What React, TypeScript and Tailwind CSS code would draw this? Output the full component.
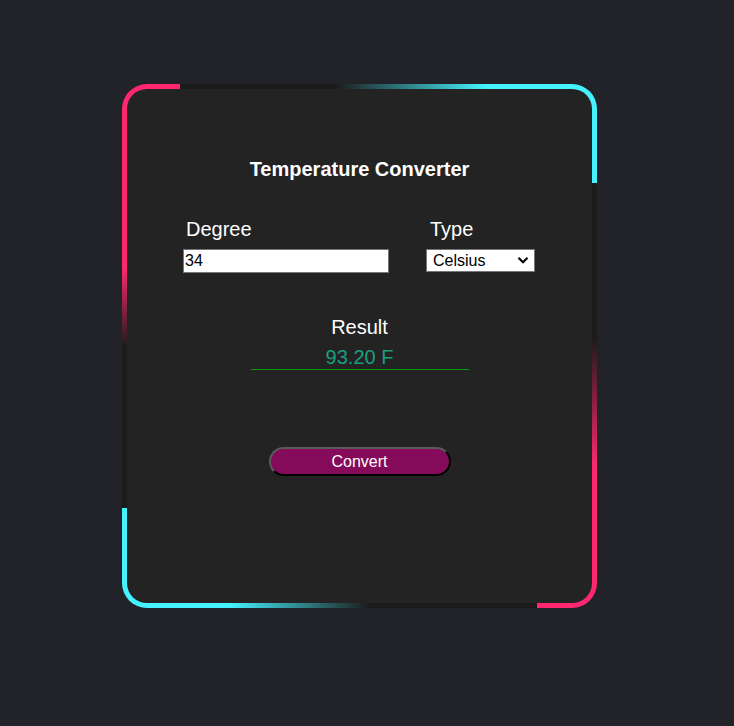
import React from "react";

export default function App() {
  return (
    <div
      className="min-h-[726px] w-full bg-[#222328] pt-[84px] pl-[122px]"
      style={{ fontFamily: '"Liberation Sans", Arial, sans-serif' }}
    >
      <div className="relative w-[475px] h-[524px] rounded-[25px] bg-[#1b1b1b] overflow-hidden">
        {/* gradient border pieces */}
        <div className="absolute left-0 top-0 w-[58px] h-[263px] bg-[linear-gradient(to_bottom,#ff2770_70%,transparent)]" />
        <div className="absolute right-0 top-0 w-[262px] h-[99px] bg-[linear-gradient(to_right,transparent,#45f3ff_58%)]" />
        <div className="absolute left-0 bottom-0 w-[248px] h-[100px] bg-[linear-gradient(to_right,#45f3ff_43%,transparent)]" />
        <div className="absolute right-0 bottom-0 w-[60px] h-[271px] bg-[linear-gradient(to_top,#ff2770_52%,transparent)]" />

        {/* inner card */}
        <div className="absolute inset-[5px] rounded-[20px] bg-[#232323] flex flex-col items-center">
          <h1 className="mt-[69px] text-[20px] leading-[23px] font-bold text-white">
            Temperature Converter
          </h1>

          <div className="mt-[37px] flex gap-[37px] self-start ml-[56px]">
            <div className="flex flex-col w-[206px]">
              <label className="ml-[3px] text-[20px] leading-[23px] text-white">Degree</label>
              <input
                defaultValue="34"
                className="mt-[8px] h-[24px] w-[206px] bg-white border border-[#767676] px-[1px] text-[16px] text-black outline-none"
              />
            </div>
            <div className="flex flex-col w-[109px]">
              <label className="ml-[4px] text-[20px] leading-[23px] text-white">Type</label>
              <div className="relative mt-[8px] h-[24px] w-[109px]">
                <select
                  defaultValue="Celsius"
                  className="appearance-none h-[23px] w-[109px] bg-white border border-[#767676] pl-[6px] text-[16px] leading-[21px] text-black outline-none"
                >
                  <option>Celsius</option>
                  <option>Fahrenheit</option>
                </select>
                <svg
                  className="pointer-events-none absolute right-[6px] top-[7px]"
                  width="12"
                  height="9"
                  viewBox="0 0 12 9"
                >
                  <path d="M1.5 1.8 L6 6.3 L10.5 1.8" fill="none" stroke="#000" strokeWidth="2.2" />
                </svg>
              </div>
            </div>
          </div>

          <div className="mt-[43px] text-[20px] leading-[23px] text-white">Result</div>
          <div className="mt-[7px] w-[218px] text-center text-[20px] leading-[23px] text-[#1a9e80]">
            93.20 F
          </div>
          <div className="w-[218px] h-px bg-[#0a9a0a]" />

          <button className="mt-[77px] w-[182px] h-[29px] rounded-full bg-[#860a5a] border-2 border-t-[#5a5a5a] border-l-[#5a5a5a] border-b-black border-r-black text-white text-[16px] leading-[18px]">
            Convert
          </button>
        </div>
      </div>
    </div>
  );
}
